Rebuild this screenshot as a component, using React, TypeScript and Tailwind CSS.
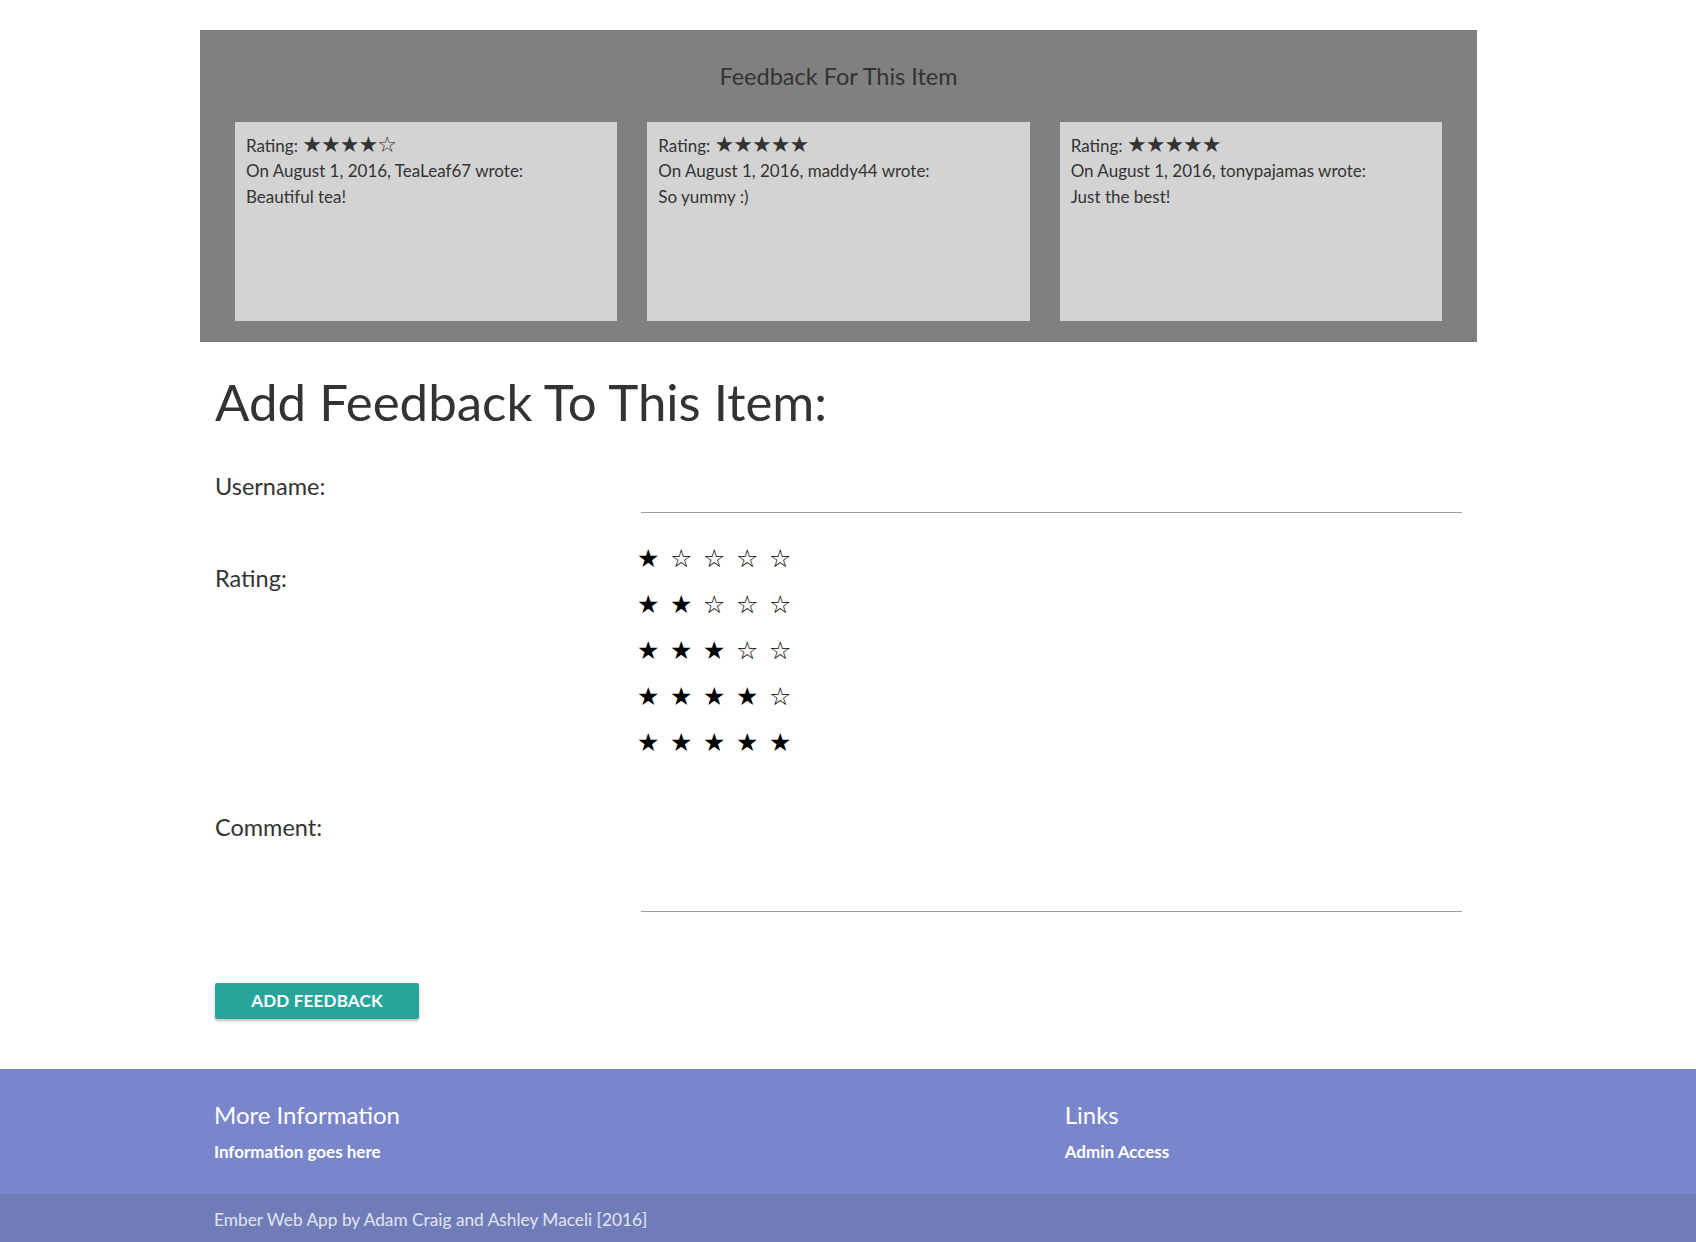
import React from "react";

type Review = {
  stars: number;
  user: string;
  text: string;
};

const reviews: Review[] = [
  { stars: 4, user: "TeaLeaf67", text: "Beautiful tea!" },
  { stars: 5, user: "maddy44", text: "So yummy :)" },
  { stars: 5, user: "tonypajamas", text: "Just the best!" },
];

function starString(n: number) {
  return "★★★★★".slice(0, n) + "☆☆☆☆☆".slice(0, 5 - n);
}

function ReviewCard({ review }: { review: Review }) {
  return (
    <div className="h-[199px] bg-[#d3d3d3] px-[11px] pt-[8px] text-[17px] leading-[26px] text-[#333]">
      <p className="h-[28px] leading-[30px]">
        Rating:{" "}
        <span className="font-['DejaVu_Sans'] text-[22px] tracking-[-1px]">
          {starString(review.stars)}
        </span>
      </p>
      <p>On August 1, 2016, {review.user} wrote:</p>
      <p>{review.text}</p>
    </div>
  );
}

function StarRow({ filled }: { filled: number }) {
  return (
    <div className="flex h-[46px] items-center gap-[14px] font-['DejaVu_Sans'] text-[25px] text-black">
      {[1, 2, 3, 4, 5].map((i) => (
        <span key={i} className="w-[19px] text-center">
          {i <= filled ? "★" : "☆"}
        </span>
      ))}
    </div>
  );
}

export default function App() {
  return (
    <div className="min-h-[1242px] bg-white font-['Lato',sans-serif] text-[#333]">
      <div className="pr-[19px]">
        <div className="mx-auto w-[1277px]">
          {/* existing feedback */}
          <section className="mt-[30px] bg-[#808080] pb-[21px]">
            <h3 className="pt-[28px] pb-[27px] text-center text-[23.5px] leading-[37px] text-[#333]">
              Feedback For This Item
            </h3>
            <div className="grid grid-cols-3 gap-[30px] px-[35px]">
              {reviews.map((r) => (
                <ReviewCard key={r.user} review={r} />
              ))}
            </div>
          </section>

          {/* new feedback form */}
          <section className="px-[15px]">
            <h2 className="mt-[20px] text-[51px] leading-[80px] text-[#333]">
              Add Feedback To This Item:
            </h2>

            <div className="mt-[20px] grid grid-cols-[426px_821px]">
              <label className="pt-[9px] text-[23.5px] leading-[30px]">Username:</label>
              <div className="h-[51px] border-b border-[#9e9e9e]" />

              <label className="pt-[50px] text-[23.5px] leading-[30px]">Rating:</label>
              <div className="-ml-[4px] pt-[23px]">
                {[1, 2, 3, 4, 5].map((n) => (
                  <StarRow key={n} filled={n} />
                ))}
              </div>

              <label className="pt-[46px] text-[23.5px] leading-[30px]">Comment:</label>
              <div className="h-[146px] border-b border-[#9e9e9e]" />
            </div>

            <button className="mt-[71px] h-[36px] w-[204px] rounded-[2px] bg-[#26a69a] text-[17px] font-bold tracking-[0.2px] text-white uppercase shadow-[0_2px_3px_rgba(0,0,0,0.25)]">
              Add Feedback
            </button>
          </section>
        </div>
      </div>

      <footer className="mt-[50px] bg-[#7986cb] text-white">
        <div className="pr-[19px]">
          <div className="mx-auto grid w-[1277px] grid-cols-12 px-[14px] pt-[31px] pb-[31px]">
            <div className="col-span-8">
              <h5 className="text-[24px] leading-[30px]">More Information</h5>
              <p className="mt-[11px] text-[17px] leading-[22px] font-bold">Information goes here</p>
            </div>
            <div className="col-span-4 pl-[18px]">
              <h5 className="text-[24px] leading-[30px]">Links</h5>
              <p className="mt-[11px] text-[17px] leading-[22px] font-bold">Admin Access</p>
            </div>
          </div>
        </div>
        <div className="h-[50px] bg-[#707cb8]">
          <div className="pr-[19px]">
            <div className="mx-auto w-[1277px] px-[14px] pt-[13px] text-[17.3px] text-white/80">
              Ember Web App by Adam Craig and Ashley Maceli [2016]
            </div>
          </div>
        </div>
      </footer>
    </div>
  );
}
